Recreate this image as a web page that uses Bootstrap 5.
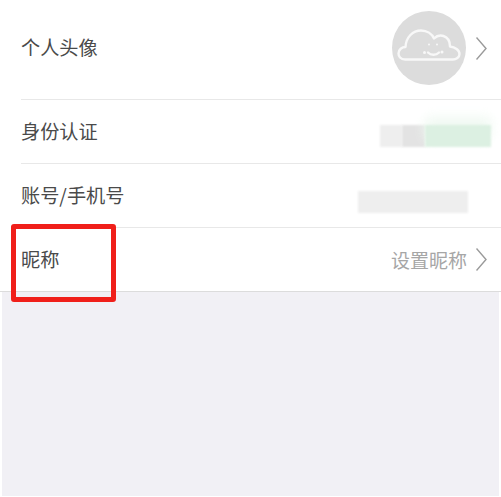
<!DOCTYPE html>
<html lang="zh">
<head>
<meta charset="utf-8">
<title>个人信息</title>
<link href="https://cdn.jsdelivr.net/npm/bootstrap@5.3.0/dist/css/bootstrap.min.css" rel="stylesheet">
<style>
html,body{height:497px;overflow:hidden;background:#fff}
body{font-family:"Noto Sans CJK SC","Liberation Sans",sans-serif;position:relative}
.sheet{width:501px;height:497px}
.setting{padding-left:22px;font-size:19.200px;color:#4a4a4a;line-height:1;margin-left:-1px}
.setting-inner{height:100%;padding-right:14px;border-bottom:1px solid #e8e8e8}
.row-avatar{height:100px}
.avatar-inner{padding-bottom:3px}
.cloud{margin-bottom:7px}
.row-plain{height:64px}
.row-last{height:64px;padding-right:14px;margin-left:0;padding-left:21px;border-bottom:1px solid #dcdcdc}
.avatar-disc{width:74px;height:74px;border-radius:50%;background:#dcdcdc;margin-right:10px}
.chev{width:11px;height:23px;flex:none}
.hint{color:#a6a6a6;font-size:19px;margin-right:9px}
.smudge{height:22px;filter:blur(.8px)}
.sm-a{width:22px;background:#eeeeee}
.sm-b{width:23px;background:#e3e3e3}
.sm-c{width:66px;background:#dcf0e2;box-shadow:0 -8px 12px #f0f9f2}
.sm-d{width:110px;background:#eeeeee}
.end-a{margin-right:-4px;margin-top:8px}
.end-d{margin-right:19px;margin-top:12px}
.lower{height:204px;margin:0 2px 1px;background:#f1f0f5}
.redbox{position:absolute;left:11px;top:224px;width:105px;height:78px;border:5px solid #f01f1a;border-radius:3px}
</style>
</head>
<body>
<div class="sheet d-flex flex-column">
  <div class="setting row-avatar">
    <div class="setting-inner avatar-inner d-flex align-items-center justify-content-between">
      <span>个人头像</span>
      <div class="d-flex align-items-center">
        <div class="avatar-disc d-flex align-items-center justify-content-center">
          <svg class="cloud" width="64" height="32" viewBox="0 0 64 32" fill="none" stroke="#f8f8f8" stroke-width="2.400" stroke-linecap="round" stroke-linejoin="round">
            <path d="M8 30.500C3.500 30.500 1.500 27 1.500 24.500C1.500 20.500 5 18 8.500 18C9 8 16 1.500 24 1.500C30 1.500 35 5 37 9.500C40 6.500 43.500 6 46.500 7C51 8.500 53 12.500 53 17.500C58 18 62.500 21 62.500 25C62.500 28.500 59 30.500 56 30.500Z"/>
            <path d="M31 23.500C34 26.500 39 26.500 42 23.500"/>
            <circle cx="27.500" cy="23.500" r="1.500" fill="#f8f8f8" stroke="none"/>
            <circle cx="45" cy="23" r="1.500" fill="#f8f8f8" stroke="none"/>
            <circle cx="32" cy="15.500" r="1" fill="#f8f8f8" stroke="none"/>
            <circle cx="40" cy="15.500" r="1" fill="#f8f8f8" stroke="none"/>
          </svg>
        </div>
        <svg class="chev" viewBox="0 0 11 23" fill="none" stroke="#9a9a9a" stroke-width="1.400"><path d="M.5 .5L10 11.500L.5 22.500"/></svg>
      </div>
    </div>
  </div>
  <div class="setting row-plain">
    <div class="setting-inner d-flex align-items-center justify-content-between">
      <span>身份认证</span>
      <div class="d-flex end-a">
        <div class="smudge sm-a"></div>
        <div class="smudge sm-b"></div>
        <div class="smudge sm-c"></div>
      </div>
    </div>
  </div>
  <div class="setting row-plain">
    <div class="setting-inner d-flex align-items-center justify-content-between">
      <span>账号/手机号</span>
      <div class="d-flex end-d">
        <div class="smudge sm-d"></div>
      </div>
    </div>
  </div>
  <div class="setting row-last d-flex align-items-center justify-content-between">
    <span>昵称</span>
    <div class="d-flex align-items-center">
      <span class="hint">设置昵称</span>
      <svg class="chev" viewBox="0 0 11 23" fill="none" stroke="#9a9a9a" stroke-width="1.400"><path d="M.5 .5L10 11.500L.5 22.500"/></svg>
    </div>
  </div>
  <div class="lower"></div>
</div>
<div class="redbox"></div>
<script src="https://cdn.jsdelivr.net/npm/bootstrap@5.3.0/dist/js/bootstrap.bundle.min.js"></script>
</body>
</html>
